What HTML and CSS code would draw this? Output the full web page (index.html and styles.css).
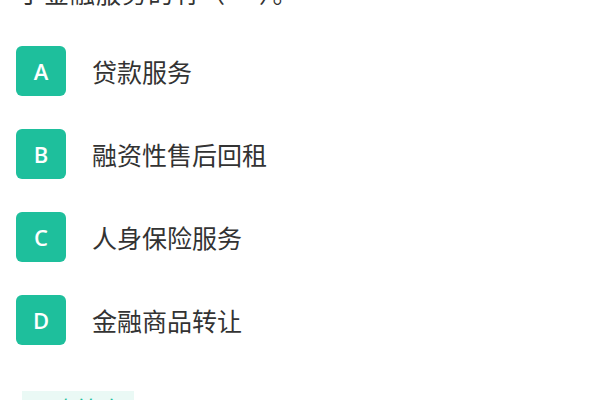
FILE: index.html
```html
<!DOCTYPE html>
<html lang="zh-CN">
<head>
<meta charset="utf-8">
<link rel="stylesheet" href="styles.css">
</head>
<body>
<div class="page">
  <p class="question">于金融服务的有（&nbsp;&nbsp;&nbsp;&nbsp;&nbsp;）。</p>
  <ul class="options">
    <li class="option"><span class="badge">A</span><span class="label">贷款服务</span></li>
    <li class="option"><span class="badge">B</span><span class="label">融资性售后回租</span></li>
    <li class="option"><span class="badge">C</span><span class="label">人身保险服务</span></li>
    <li class="option"><span class="badge">D</span><span class="label">金融商品转让</span></li>
  </ul>
  <div class="answer"><span class="answer-title">正确答案</span></div>
</div>
</body>
</html>
```
FILE: styles.css
```css
html, body {
  margin: 0;
  padding: 0;
  background: #ffffff;
  overflow: hidden;
}
.page {
  width: 600px;
  height: 400px;
  overflow: hidden;
  padding: 0 16px;
  box-sizing: border-box;
  font-family: "Noto Sans CJK SC", "Noto Sans", sans-serif;
  color: #333333;
}
.question {
  margin: -26px 0 0 2px;
  font-size: 25px;
  line-height: 36px;
  letter-spacing: 1px;
  color: #333333;
}
.options {
  list-style: none;
  margin: 36px 0 0 0;
  padding: 0;
  display: flex;
  flex-direction: column;
  gap: 33px;
}
.option {
  display: flex;
  align-items: center;
  height: 50px;
}
.badge {
  width: 50px;
  height: 50px;
  border-radius: 6px;
  background: #1ebf9c;
  color: #ffffff;
  font-family: "Open Sans", "Noto Sans", sans-serif;
  font-weight: 600;
  font-size: 22px;
  display: flex;
  align-items: center;
  justify-content: center;
  flex-shrink: 0;
}
.label {
  margin-left: 26px;
  font-size: 25px;
  line-height: 32px;
  color: #333333;
}
.answer {
  margin-top: 46px;
  padding-left: 6px;
}
.answer-title {
  display: inline-block;
  background: #eaf9f5;
  color: #1ebf9c;
  font-size: 24px;
  line-height: 32px;
  padding: 2px 10px 0 6px;
}
```
